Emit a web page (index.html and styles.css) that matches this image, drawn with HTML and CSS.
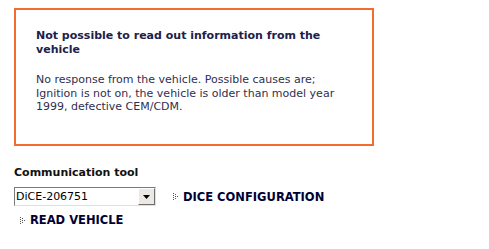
FILE: index.html
```html
<!DOCTYPE html>
<html lang="en">
<head>
    <meta charset="UTF-8">
    <title>Read vehicle</title>
    <link rel="stylesheet" href="styles.css">
</head>
<body>
    <div class="page">
        <div class="message-box">
            <h4 class="message-title">Not possible to read out information from the vehicle</h4>
            <p class="message-text">No response from the vehicle. Possible causes are; Ignition is not on, the vehicle is older than model year 1999, defective CEM/CDM.</p>
        </div>

        <div class="tool-section">
            <div class="tool-label">Communication tool</div>
            <div class="tool-row">
                <div class="combo">
                    <span class="combo-value">DiCE-206751</span>
                    <span class="combo-button">
                        <svg width="7" height="4" viewBox="0 0 7 4"><path d="M0 0h7L3.5 4z" fill="#000"/></svg>
                    </span>
                </div>
                <a class="action-link" href="#">
                    <svg class="dots" width="5" height="7" viewBox="0 0 5 7"><g fill="#555"><rect x="0" y="0" width="1" height="1"/><rect x="0" y="2" width="1" height="1"/><rect x="0" y="4" width="1" height="1"/><rect x="0" y="6" width="1" height="1"/><rect x="2" y="1" width="1" height="1"/><rect x="2" y="5" width="1" height="1"/><rect x="4" y="3" width="1" height="1"/><rect x="2" y="3" width="1" height="1"/></g></svg>
                    DICE CONFIGURATION
                </a>
            </div>
            <a class="action-link read-link" href="#">
                <svg class="dots" width="5" height="7" viewBox="0 0 5 7"><g fill="#555"><rect x="0" y="0" width="1" height="1"/><rect x="0" y="2" width="1" height="1"/><rect x="0" y="4" width="1" height="1"/><rect x="0" y="6" width="1" height="1"/><rect x="2" y="1" width="1" height="1"/><rect x="2" y="5" width="1" height="1"/><rect x="4" y="3" width="1" height="1"/><rect x="2" y="3" width="1" height="1"/></g></svg>
                READ VEHICLE
            </a>
        </div>
    </div>
</body>
</html>
```

FILE: styles.css
```css
* {
    margin: 0;
    padding: 0;
    box-sizing: border-box;
}

body {
    font-family: 'DejaVu Sans', Verdana, sans-serif;
    font-size: 11px;
    color: #2b2b4a;
    background: #fff;
}

.page {
    padding: 8px 14px;
}

.message-box {
    width: 360px;
    height: 138px;
    border: 2px solid #f26b2f;
    padding: 19px 12px 0 20px;
}

.message-title {
    font-size: 11px;
    font-weight: bold;
    line-height: 14px;
    color: #20204a;
    margin-bottom: 16px;
}

.message-text {
    line-height: 13.5px;
    color: #2f2f50;
}

.tool-section {
    margin-top: 20px;
}

.tool-label {
    font-weight: bold;
    color: #111;
    line-height: 14px;
    margin-bottom: 7px;
}

.tool-row {
    display: flex;
    align-items: center;
    gap: 17px;
}

.combo {
    display: flex;
    width: 142px;
    height: 19px;
    border: 1px solid;
    border-color: #7a7a7a #e0e0e0 #e0e0e0 #7a7a7a;
    background: #fff;
}

.combo-value {
    flex: 1;
    padding: 2px 0 0 1px;
    color: #000;
    line-height: 14px;
}

.combo-button {
    width: 17px;
    display: flex;
    align-items: center;
    justify-content: center;
    background: #ece9e4;
    border: 1px solid;
    border-color: #fff #6e6e6e #6e6e6e #fff;
}

.action-link {
    display: flex;
    align-items: center;
    gap: 5px;
    font-size: 11.5px;
    font-weight: bold;
    color: #000033;
    text-decoration: none;
    line-height: 14px;
}

.read-link {
    margin: 7px 0 0 6px;
}
```
